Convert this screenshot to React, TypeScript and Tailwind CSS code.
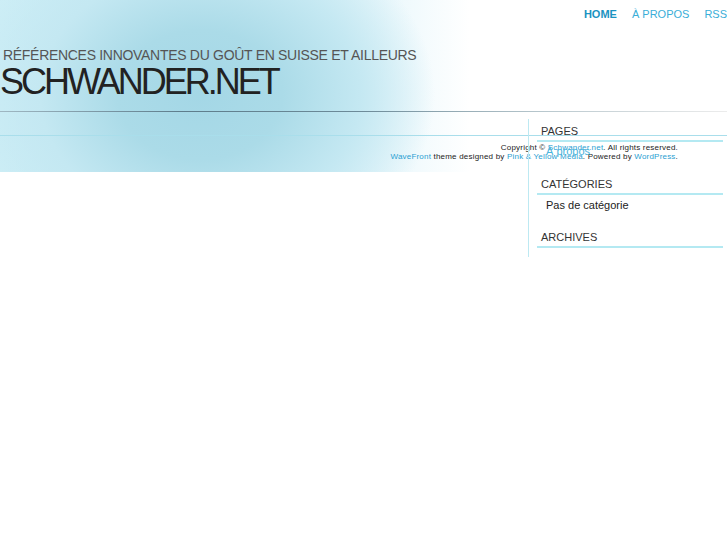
import React from 'react'

const navItems = [
  { label: 'Home', active: true },
  { label: 'À propos', active: false },
  { label: 'RSS', active: false },
]

function Widget({ title, children, className = '' }: { title: string; children?: React.ReactNode; className?: string }) {
  return (
    <div className={className}>
      <h2 className="pl-1 pb-[2px] border-b-2 border-[#b4e9f2] text-[11px] leading-[13px] uppercase text-[#333]">
        {title}
      </h2>
      {children}
    </div>
  )
}

export default function App() {
  return (
    <div
      className="relative min-h-[545px] bg-white bg-no-repeat bg-[length:480px_172px] bg-[image:radial-gradient(ellipse_235px_185px_at_200px_95px,#a4d7e6_0%,#abdbe8_35%,#c4e8f2_68%,rgba(214,241,248,0)_100%),linear-gradient(to_right,#cdeef6_0%,#c7eaf4_40%,#e6f6fb_76%,rgba(255,255,255,0)_98%)] font-['Liberation_Sans',Arial,sans-serif]"
    >
      {/* Header */}
      <nav className="flex h-7 items-center justify-end gap-[15px] text-[11px] uppercase">
        {navItems.map((item) => (
          <a
            key={item.label}
            href="#"
            className={item.active ? 'font-bold text-[#1b93c1]' : 'text-[#3aaed8]'}
          >
            {item.label}
          </a>
        ))}
      </nav>

      <p className="mt-[19px] pl-[3px] text-[14px] leading-4 uppercase tracking-[-0.3px] text-[#555]">
        Références innovantes du goût en Suisse et ailleurs
      </p>
      <h1 className="mt-px text-[36px] leading-9 uppercase tracking-[-3px] text-[#222]">
        Schwander.net
      </h1>

      <div className="mt-[11px] h-px bg-[linear-gradient(to_right,#9fb7c2_0%,#5e7d8c_25%,#6d8b99_50%,#b9c8ce_75%,#ececec_100%)]" />
      <div className="mt-[23px] h-px bg-[#a9deeb]" />

      {/* Footer */}
      <footer className="mt-[7px] w-[678px] text-right text-[8px] leading-[9px] tracking-[0.2px] text-[#222]">
        <p>
          Copyright © <a href="#" className="text-[#2aa0d2]">Schwander.net</a>. All rights reserved.
        </p>
        <p>
          <a href="#" className="text-[#2aa0d2]">WaveFront</a> theme designed by{' '}
          <a href="#" className="text-[#2aa0d2]">Pink &amp; Yellow Media</a>. Powered by{' '}
          <a href="#" className="text-[#2aa0d2]">WordPress</a>.
        </p>
      </footer>

      {/* Sidebar */}
      <aside className="absolute left-[528px] top-[119px] w-[195px] border-l border-[#bde9f2] pt-[6px] pb-[9px] pl-2">
        <Widget title="Pages">
          <a href="#" className="mt-[3px] block pl-[9px] text-[11px] leading-[13px] text-[#4ab3dc]">
            À propos
          </a>
        </Widget>
        <Widget title="Catégories" className="mt-5">
          <p className="mt-1 pl-[9px] text-[11px] leading-[13px] text-[#222]">Pas de catégorie</p>
        </Widget>
        <Widget title="Archives" className="mt-[19px]" />
      </aside>
    </div>
  )
}
